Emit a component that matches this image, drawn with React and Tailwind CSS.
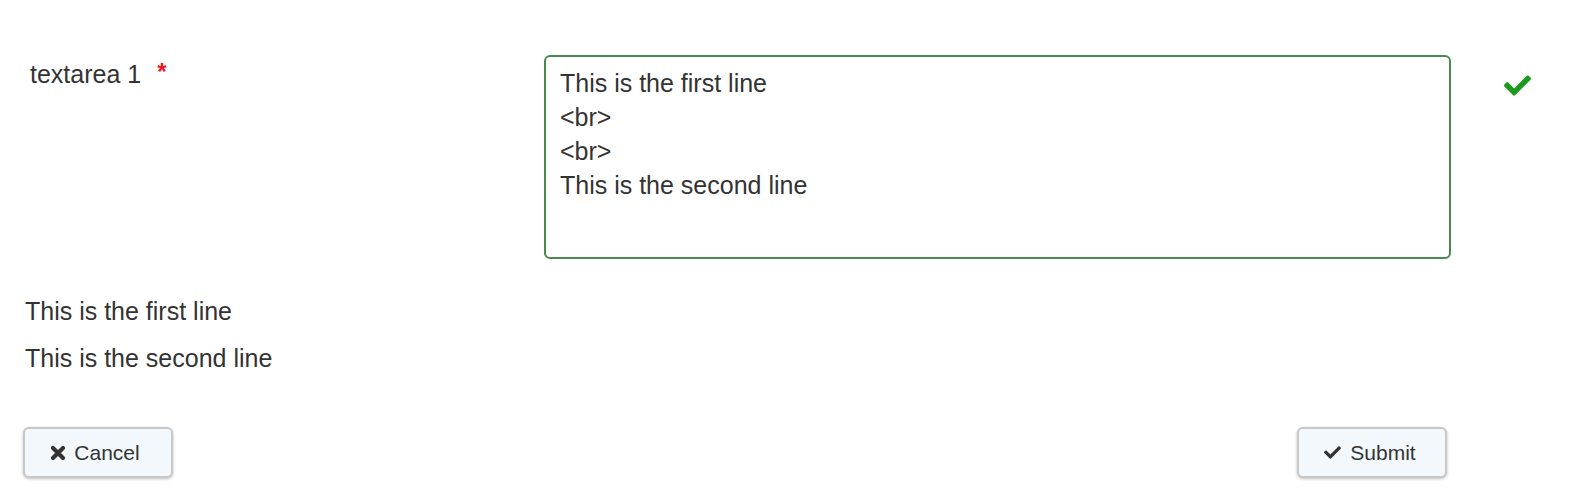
import { FaCheck } from 'react-icons/fa';

const lines = ['This is the first line', '<br>', '<br>', 'This is the second line'];

function XIcon() {
  return (
    <svg viewBox="0 0 16 16" className="h-[16px] w-[16px]" fill="none" stroke="currentColor" strokeWidth="4.2" strokeLinecap="round">
      <path d="M3 3L13 13M13 3L3 13" />
    </svg>
  );
}

export default function App() {
  return (
    <div className="h-[504px] w-full bg-white font-['Liberation_Sans',Arial,sans-serif] text-[#333]">
      {/* Field row */}
      <div className="flex items-start pt-[55px]">
        <div className="flex w-[544px] shrink-0 items-start pl-[30px] pt-[2px] text-[25px] leading-[34px]">
          textarea 1
          <span className="ml-[16px] text-[24px] font-bold leading-[30px] text-[#f0141e]">*</span>
        </div>
        <div className="h-[204px] w-[907px] shrink-0 rounded-[6px] border-2 border-[#4a8a50] pl-[14px] pt-[9px] text-[25px] leading-[34px]">
          {lines.map((l, i) => (
            <div key={i}>{l}</div>
          ))}
        </div>
        <div className="ml-[53px] mt-[17px] text-[#189a1d]">
          <FaCheck className="h-[27px] w-[27px]" />
        </div>
      </div>

      {/* Rendered output */}
      <div className="space-y-[13px] pl-[25px] pt-[35px] text-[25px] leading-[34px]">
        <p>This is the first line</p>
        <p>This is the second line</p>
      </div>

      {/* Actions */}
      <div className="flex w-[1447px] justify-between pl-[23px] pt-[52px]">
        <button className="flex h-[51px] w-[150px] items-center justify-center gap-[8px] rounded-[6px] border-2 border-[#c8c8c8] bg-[#f3f8fd] pr-[6px] text-[21px] text-[#333] shadow-[0_1px_3px_rgba(0,0,0,0.25)]">
          <XIcon />
          Cancel
        </button>
        <button className="flex h-[51px] w-[150px] items-center justify-center gap-[9px] rounded-[6px] border-2 border-[#c8c8c8] bg-[#f3f8fd] pr-[4px] text-[21px] text-[#333] shadow-[0_1px_3px_rgba(0,0,0,0.25)]">
          <FaCheck className="h-[17px] w-[17px]" />
          Submit
        </button>
      </div>
    </div>
  );
}
